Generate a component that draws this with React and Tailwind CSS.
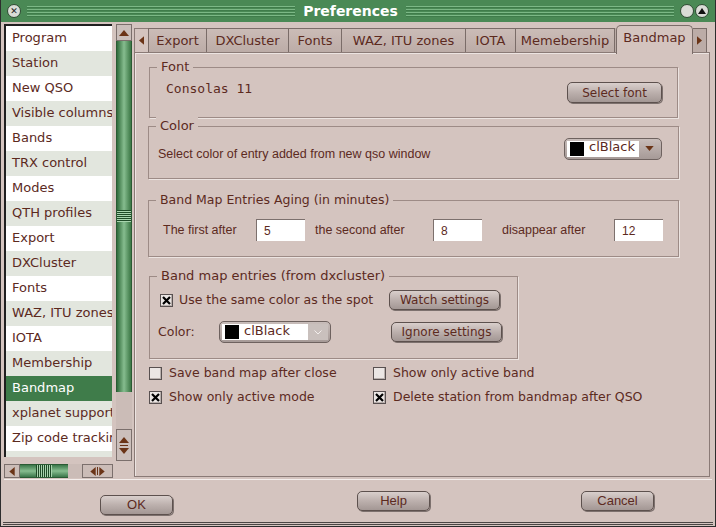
import React from 'react';

const items = [
  'Program', 'Station', 'New QSO', 'Visible columns', 'Bands', 'TRX control', 'Modes',
  'QTH profiles', 'Export', 'DXCluster', 'Fonts', 'WAZ, ITU zones', 'IOTA', 'Membership',
  'Bandmap', 'xplanet support', 'Zip code tracking', 'LoTW/eQSL support',
];

const tabs = [
  { label: 'Export', w: 'w-[58px]' },
  { label: 'DXCluster', w: 'w-[82px]' },
  { label: 'Fonts', w: 'w-[53px]' },
  { label: 'WAZ, ITU zones', w: 'w-[124px]' },
  { label: 'IOTA', w: 'w-[50px]' },
  { label: 'Memebership', w: 'w-[99px]' },
];

function Tri({ dir = 'up', className = '' }) {
  const pts = {
    up: '0,6 5,0 10,6',
    down: '0,0 10,0 5,6',
    left: '6,0 6,10 0,5',
    right: '0,0 6,5 0,10',
  }[dir];
  const vb = dir === 'up' || dir === 'down' ? '0 0 10 6' : '0 0 6 10';
  return (
    <svg viewBox={vb} className={className}>
      <polygon points={pts} fill="#6b3417" />
    </svg>
  );
}

function Button({ children, className = '' }) {
  return (
    <div
      className={`flex items-center justify-center rounded-[5px] border border-[#5d514e] bg-linear-to-b from-[#d9cfcc] via-[#bcb0ad] to-[#a39794] shadow-[1px_1px_0_#7d716e] text-[12px] text-[#5c2a1e] ${className}`}
    >
      {children}
    </div>
  );
}

function Check({ checked }) {
  return (
    <span className="flex h-[13px] w-[13px] shrink-0 items-center justify-center border border-[#585050] bg-[#ebe6e4] shadow-[inset_-1px_-1px_0_#b9b0ad]">
      {checked && (
        <svg viewBox="0 0 9 9" className="h-[9px] w-[9px]">
          <path d="M1 1 L8 8 M8 1 L1 8" stroke="#000" strokeWidth="2.2" />
        </svg>
      )}
    </span>
  );
}

function ColorBox({ className = '', active = true }) {
  return (
    <div className={`flex h-[22px] items-stretch rounded-[5px] border border-[#6e625f] bg-linear-to-b from-[#c8bdba] to-[#a69a97] p-[2px] ${className}`}>
      <div className="flex flex-1 items-center gap-[5px] bg-white pl-[3px] text-[13px] text-[#5c2a1e]">
        <span className="h-[14px] w-[14px] bg-black" />
        <span className="-mt-[3px]">clBlack</span>
      </div>
      <div className={`flex w-[20px] items-center justify-center ${active ? '' : 'bg-[#c9c0bd]'}`}>
        {active ? (
          <Tri dir="down" className="h-[5px] w-[9px]" />
        ) : (
          <svg viewBox="0 0 8 5" className="h-[5px] w-[8px]">
            <path d="M0.5 0.5 L4 4 L7.5 0.5" stroke="#f3eeec" fill="none" />
          </svg>
        )}
      </div>
    </div>
  );
}

function Group({ title, className = '', titleClass = 'text-[13px]', children }) {
  return (
    <div className={`relative border border-[#9d8b86] shadow-[1px_1px_0_#ece4e1] ${className}`}>
      <span className={`absolute -top-[10px] left-[7px] bg-[#d4c4bf] px-[4px] leading-[18px] text-[#5c2a1e] ${titleClass}`}>
        {title}
      </span>
      {children}
    </div>
  );
}

function Input({ value }) {
  return (
    <div className="flex h-[22px] w-[49px] items-center border-t border-l border-[#7c706d] bg-white pl-[7px] text-[12px] text-[#5c2a1e]">
      {value}
    </div>
  );
}

function App() {
  return (
    <div className="flex h-[527px] w-[716px] flex-col border-x border-b border-[#2d2d2d] bg-[#d4c4bf] font-['DejaVu_Sans',sans-serif] text-[#5c2a1e]">
      {/* title bar */}
      <div className="flex h-[22px] items-center bg-[#4a8955] px-[6px]">
        <span className="flex h-[14px] w-[14px] items-center justify-center rounded-full border border-[#2e4a32] bg-[#d9dcd6] text-[9px] font-bold leading-none text-[#222]">
          ✕
        </span>
        <div className="ml-[6px] h-[11px] flex-1 bg-[repeating-linear-gradient(to_bottom,#7cb886_0_1px,#3f7c4a_1px_2px,transparent_2px_3px)]" />
        <span className="px-[8px] text-[14px] font-bold text-white">Preferences</span>
        <div className="mr-[6px] h-[11px] flex-1 bg-[repeating-linear-gradient(to_bottom,#7cb886_0_1px,#3f7c4a_1px_2px,transparent_2px_3px)]" />
        <span className="h-[14px] w-[14px] rounded-full border border-[#2e4a32] bg-[#d9dcd6]" />
        <span className="ml-[1px] flex h-[14px] w-[14px] items-center justify-center rounded-full border border-[#2e4a32] bg-[#d9dcd6]">
          <svg viewBox="0 0 8 6" className="h-[6px] w-[8px]">
            <polygon points="0,6 4,0 8,6" fill="#111" />
          </svg>
        </span>
      </div>

      {/* body */}
      <div className="flex h-[457px] pt-[2px]">
        {/* left list */}
        <div className="ml-[3px] flex w-[129px] flex-col">
          <div className="flex h-[440px]">
            <div className="h-[433px] w-[108px] overflow-hidden border-t-2 border-l-2 border-[#1f1f1f] bg-white">
              {items.map((it, i) => (
                <div
                  key={it}
                  className={`h-[25px] overflow-hidden whitespace-nowrap pl-[6px] text-[13px] leading-[24px] ${
                    it === 'Bandmap'
                      ? 'bg-[#3f7c4a] text-white'
                      : i % 2 === 1
                      ? 'bg-[#e2e6de]'
                      : 'bg-white'
                  }`}
                >
                  {it}
                </div>
              ))}
            </div>
            <div className="ml-[4px] flex w-[16px] flex-col">
              <div className="flex h-[17px] items-center justify-center border border-[#7b6f6c] bg-[#cbbfbb]">
                <Tri dir="up" className="h-[8px] w-[10px]" />
              </div>
              <div className="relative flex h-[351px] justify-center border-x border-[#2a5a33] bg-linear-to-r from-[#2f6b3b] via-[#86bd8f] to-[#3a7745]">
                <div className="absolute top-[169px] h-[12px] w-[14px] bg-[repeating-linear-gradient(to_bottom,#1f4a27_0_1px,#a8d4ae_1px_2px)]" />
              </div>
              <div className="h-[37px] bg-[#cbbcb7]" />
              <div className="flex h-[32px] flex-col items-center justify-center gap-[1px] border border-[#7b6f6c] bg-[#cbbfbb]">
                <Tri dir="up" className="h-[8px] w-[10px]" />
                <span className="h-[1px] w-[8px] bg-[#6b3417]" />
                <Tri dir="down" className="h-[8px] w-[10px]" />
              </div>
            </div>
          </div>
          <div className="flex h-[14px] w-[109px] bg-[#cbbcb7]">
            <div className="flex w-[16px] items-center justify-center border border-[#7b6f6c]">
              <Tri dir="left" className="h-[9px] w-[6px]" />
            </div>
            <div className="flex w-[48px] items-center justify-center border-y border-[#2a5a33] bg-linear-to-b from-[#3a774a] via-[#86bd8f] to-[#3a774a]">
              <div className="h-[12px] w-[16px] bg-[repeating-linear-gradient(to_right,#1f4a27_0_1px,#a8d4ae_1px_2px)]" />
            </div>
            <div className="w-[14px]" />
            <div className="flex flex-1 items-center justify-center gap-[1px] border border-[#7b6f6c]">
              <Tri dir="left" className="h-[9px] w-[6px]" />
              <span className="h-[8px] w-[1px] bg-[#6b3417]" />
              <Tri dir="right" className="h-[9px] w-[6px]" />
            </div>
          </div>
        </div>

        {/* right notebook */}
        <div className="ml-[1px] flex w-[576px] flex-col">
          <div className="flex h-[28px] items-end">
            <div className="flex h-[24px] w-[14px] items-center justify-center border-t border-l border-[#8a7a76]">
              <Tri dir="left" className="h-[9px] w-[5px]" />
            </div>
            {tabs.map((t) => (
              <div
                key={t.label}
                className={`flex h-[24px] items-center justify-center border-t border-l border-[#7a6c68] bg-linear-to-b from-[#cbbcb7] to-[#bcaca7] text-[13px] ${t.w}`}
              >
                {t.label}
              </div>
            ))}
            <div className="h-[24px] w-[2px] border-l border-[#7a6c68] bg-[#bcaca7]" />
            <div className="z-10 -mb-[2px] flex h-[29px] w-[77px] items-start justify-center rounded-t-[5px] border border-b-0 border-[#7a6c68] bg-[#d4c4bf] pt-[2px] text-[13px]">
              Bandmap
            </div>
            <div className="flex h-[24px] w-[14px] items-center justify-center border-t border-r border-[#7a6c68] bg-[#bcaca7]">
              <Tri dir="right" className="h-[9px] w-[5px]" />
            </div>
          </div>

          <div className="flex h-[425px] flex-col border border-[#8a7a76] pl-[14px] shadow-[inset_1px_1px_0_#ece4e1]">
            <Group title="Font" className="mt-[14px] h-[51px] w-[529px]">
              <div className="flex h-full items-center justify-between pl-[16px] pr-[15px]">
                <span className="-mt-[8px] font-['DejaVu_Sans_Mono',monospace] text-[13px]">Consolas 11</span>
                <Button className="h-[21px] w-[95px]">Select font</Button>
              </div>
            </Group>

            <Group title="Color" className="mt-[8px] ml-[-1px] h-[53px] w-[531px]">
              <div className="flex h-full items-center justify-between pl-[9px] pr-[16px]">
                <span className="mt-[4px] font-['Liberation_Sans',sans-serif] text-[12.5px]">
                  Select color of entry added from new qso window
                </span>
                <ColorBox className="-mt-[8px] w-[98px]" />
              </div>
            </Group>

            <Group title="Band Map Entries Aging (in minutes)" titleClass="text-[12.5px]" className="mt-[21px] ml-[-1px] h-[57px] w-[531px]">
              <div className="flex h-full items-center pl-[14px] pt-[3px] font-['Liberation_Sans',sans-serif] text-[12.5px]">
                <span className="w-[93px]">The first after</span>
                <Input value="5" />
                <span className="ml-[10px] w-[118px]">the second after</span>
                <Input value="8" />
                <span className="ml-[20px] w-[112px]">disappear after</span>
                <Input value="12" />
              </div>
            </Group>

            <Group title="Band map entries (from dxcluster)" className="mt-[19px] h-[83px] w-[369px]">
              <div className="flex flex-col pt-[13px] text-[12.5px]">
                <div className="flex h-[20px] items-center">
                  <span className="ml-[10px]"><Check checked /></span>
                  <span className="ml-[6px] w-[210px]">Use the same color as the spot</span>
                  <Button className="h-[20px] w-[111px]">Watch settings</Button>
                </div>
                <div className="mt-[12px] flex h-[20px] items-center">
                  <span className="ml-[8px] w-[61px]">Color:</span>
                  <ColorBox active={false} className="w-[112px]" />
                  <Button className="ml-[60px] h-[20px] w-[111px]">Ignore settings</Button>
                </div>
              </div>
            </Group>

            <div className="mt-[7px] grid w-[520px] grid-cols-[224px_1fr] gap-y-[10px] text-[12.5px]">
              <label className="flex h-[14px] items-center gap-[7px]"><Check />Save band map after close</label>
              <label className="flex h-[14px] items-center gap-[7px]"><Check />Show only active band</label>
              <label className="flex h-[14px] items-center gap-[7px]"><Check checked />Show only active mode</label>
              <label className="flex h-[14px] items-center gap-[7px]"><Check checked />Delete station from bandmap after QSO</label>
            </div>
          </div>
        </div>
      </div>

      {/* bottom buttons */}
      <div className="mx-[3px] border-t border-[#f4eeec]" />
      <div className="flex h-[42px] items-start font-['Liberation_Sans',sans-serif]">
        <Button className="mt-[15px] ml-[99px] h-[20px] w-[73px] text-[13px]">OK</Button>
        <Button className="mt-[11px] ml-[184px] h-[20px] w-[73px] text-[13px]">Help</Button>
        <Button className="mt-[11px] ml-[151px] h-[20px] w-[73px] text-[13px]">Cancel</Button>
      </div>
      <div className="mx-[2px] h-[3px] border-y border-[#4b4544]" />
    </div>
  );
}

export default App;
